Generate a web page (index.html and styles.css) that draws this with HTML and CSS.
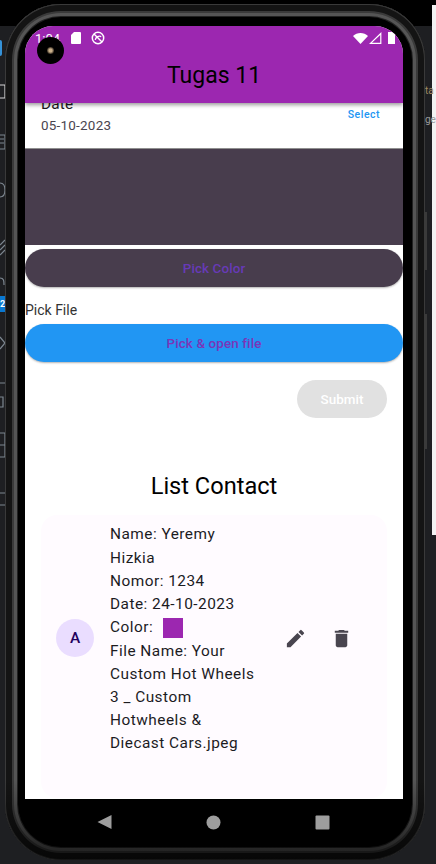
FILE: index.html
```html
<!DOCTYPE html>
<html lang="en">
<head>
    <meta charset="UTF-8">
    <meta name="viewport" content="width=device-width, initial-scale=1.0">
    <title>Tugas 11</title>
    <link rel="stylesheet" href="styles.css">
</head>
<body>

    <div class="ide-top"></div>
    <div class="ide-panel"></div>
    <div class="ide-tab"></div>
    <svg class="ide-icons" width="6" height="450" viewBox="0 0 6 450">
        <path fill="none" stroke="#d5d5d5" stroke-width="1.200" d="M0 10h5v13H0"/>
        <path fill="none" stroke="#7d8790" stroke-width="1.200" d="M0 60h5v14H0M0 64h4M0 68h4"/>
        <path fill="none" stroke="#7d8790" stroke-width="1.200" d="M0 108c4 0 5 3 5 7s-1 7-5 7"/>
        <path fill="none" stroke="#7d8790" stroke-width="1.200" d="M0 170l5-5M0 175l5-5M0 180l5-5"/>
        <path fill="none" stroke="#7d8790" stroke-width="1.200" d="M0 203c4 0 4 3 4 7"/>
        <path fill="none" stroke="#7d8790" stroke-width="1.200" d="M0 262l5 6-5 6"/>
        <path fill="none" stroke="#7d8790" stroke-width="1.200" d="M0 308h5M0 322h3v10H0M0 358h5v24H0M0 370h5M0 418h5M0 430h5"/>
    </svg>
    <div class="ide-badge">2</div>
    <span class="ide-text ide-text-1">ta</span>
    <span class="ide-text ide-text-2">ge</span>

    <div class="side-btn side-btn-power"></div>
    <div class="side-btn side-btn-volume"></div>

    <div class="phone">
        <div class="screen">
            <div class="appbar">
                <div class="statusbar">
                    <span class="clock">1:04</span>
                    <svg class="sd-icon" width="10" height="12" viewBox="0 0 10 12"><path fill="#fff" d="M3 0h6a1 1 0 0 1 1 1v10a1 1 0 0 1-1 1H1a1 1 0 0 1-1-1V3z"/></svg>
                    <svg class="sync-icon" width="14" height="14" viewBox="0 0 14 14"><circle cx="7" cy="7" r="5.700" fill="none" stroke="#fff" stroke-width="1.500"/><path d="M3 3l8 8" stroke="#fff" stroke-width="1.400"/><path d="M4.200 8.800c.6-3 3.800-4.600 6-3.200" fill="none" stroke="#fff" stroke-width="1.300"/></svg>
                    <span class="status-gap"></span>
                    <svg width="15" height="11" viewBox="0 0 15 11"><path fill="#fff" d="M0 3C4-1 11-1 15 3L7.500 11z"/></svg>
                    <svg class="signal-icon" width="13" height="12" viewBox="0 0 13 12"><path fill="none" stroke="#fff" stroke-width="1.200" d="M11.800 1.500V11.400H1.500z"/></svg>
                    <span class="battery"></span>
                </div>
                <div class="appbar-title">Tugas 11</div>
            </div>

            <div class="content">
                <div class="date-row">
                    <div class="date-text">
                        <div class="date-label">Date</div>
                        <div class="date-value">05-10-2023</div>
                    </div>
                    <span class="select-btn">Select</span>
                </div>

                <div class="color-preview"></div>
                <div class="pill pill-color">Pick Color</div>

                <div class="pick-label">Pick File</div>
                <div class="pill pill-file">Pick &amp; open file</div>

                <div class="submit-row">
                    <span class="submit-btn">Submit</span>
                </div>

                <h2 class="list-title">List Contact</h2>

                <div class="contact-card">
                    <div class="avatar">A</div>
                    <div class="contact-text">
                        <div>Name: Yeremy<br>Hizkia</div>
                        <div>Nomor: 1234</div>
                        <div>Date: 24-10-2023</div>
                        <div class="color-line">Color: <span class="swatch"></span></div>
                        <div>File Name: Your<br>Custom Hot Wheels<br>3 _ Custom<br>Hotwheels &amp;<br>Diecast Cars.jpeg</div>
                    </div>
                    <div class="contact-actions">
                        <svg width="23" height="23" viewBox="0 0 24 24"><path fill="#49454f" d="M3 17.250V21h3.750L17.810 9.940l-3.750-3.750L3 17.250zM20.710 7.040a1 1 0 0 0 0-1.410l-2.340-2.340a1 1 0 0 0-1.410 0l-1.830 1.830 3.750 3.750 1.830-1.830z"/></svg>
                        <svg width="23" height="23" viewBox="0 0 24 24"><path fill="#49454f" d="M6 19c0 1.100.9 2 2 2h8c1.100 0 2-.9 2-2V7H6v12zM19 4h-3.500l-1-1h-5l-1 1H5v2h14V4z"/></svg>
                    </div>
                </div>
            </div>
        </div>

        <div class="navbar">
            <svg width="15" height="16" viewBox="0 0 15 16"><path fill="#9e9e9e" d="M14.500 1v14L.5 8z"/></svg>
            <svg width="15" height="15" viewBox="0 0 15 15"><circle cx="7.500" cy="7.500" r="7" fill="#9e9e9e"/></svg>
            <svg width="15" height="15" viewBox="0 0 15 15"><rect x=".5" y=".5" width="14" height="14" rx="1" fill="#9e9e9e"/></svg>
        </div>

        <div class="camera"><span class="lens"></span></div>
    </div>

</body>
</html>
```

FILE: styles.css
```css
* {
    box-sizing: border-box;
}
body {
    margin: 0;
    width: 436px;
    height: 864px;
    overflow: hidden;
    position: relative;
    background: #1e1f22;
    font-family: Roboto, sans-serif;
    color: #1c1b1f;
}

/* bits of the IDE behind the emulator */
.ide-top {
    position: absolute;
    left: 0;
    top: 0;
    width: 436px;
    height: 26px;
    background: #000;
}
.ide-panel {
    position: absolute;
    left: 432px;
    top: 5px;
    width: 4px;
    height: 530px;
    background: #f2f2f2;
}
.ide-tab {
    position: absolute;
    left: 0;
    top: 40px;
    width: 2px;
    height: 16px;
    background: #3592d8;
    border-radius: 0 2px 2px 0;
}
.ide-icons {
    position: absolute;
    left: 0;
    top: 75px;
}
.ide-badge {
    position: absolute;
    left: 0;
    top: 296px;
    width: 5px;
    height: 16px;
    background: #0a78d0;
    color: #fff;
    font-size: 9px;
    font-weight: 700;
    line-height: 16px;
    overflow: hidden;
}
.ide-text {
    position: absolute;
    left: 425px;
    font-size: 10px;
    line-height: 12px;
}
.ide-text-1 {
    top: 85px;
    color: #a08a60;
}
.ide-text-2 {
    top: 114px;
    color: #9a9a9a;
}
.side-btn {
    position: absolute;
    left: 425px;
    width: 2px;
    background: #3a3a3a;
}
.side-btn-power {
    top: 212px;
    height: 58px;
}
.side-btn-volume {
    top: 314px;
    height: 135px;
}

.phone {
    position: relative;
    width: 420px;
    height: 856px;
    margin: 4px 0 0 5px;
    padding: 22px 22px 0 20px;
    background: #000;
    border-radius: 56px;
    box-shadow: inset 0 0 0 1px #3a3a3a, inset 0 0 0 7px #141414, inset 0 0 0 9px #3a3a3a, inset 0 0 0 12px #555, inset 0 0 0 13px #222;
}
/* the rim goes darker towards the bottom of the device */
.phone::after {
    content: "";
    position: absolute;
    left: 0;
    right: 0;
    bottom: 0;
    height: 80px;
    border-radius: 0 0 56px 56px;
    background: linear-gradient(rgba(0, 0, 0, 0), rgba(0, 0, 0, 0.65));
}
.screen {
    position: relative;
    z-index: 1;
    width: 378px;
    height: 773px;
    background: #fff;
    border-radius: 28px 28px 0 0;
    overflow: hidden;
    display: flex;
    flex-direction: column;
}
.appbar {
    flex: none;
    height: 77px;
    background: #9c27b0;
    box-shadow: 0 2px 4px rgba(0, 0, 0, 0.4);
    position: relative;
    z-index: 1;
}
.statusbar {
    height: 24px;
    padding: 0 8px 0 10px;
    display: flex;
    align-items: center;
    color: #fff;
    font-size: 13px;
}
.sd-icon {
    margin-left: 11px;
}
.sync-icon {
    margin-left: 10px;
}
.status-gap {
    flex: 1;
}
.signal-icon {
    margin-left: 1px;
}
.battery {
    width: 7px;
    height: 12px;
    background: #fff;
    margin-left: 6px;
}
.appbar-title {
    text-align: center;
    font-size: 23px;
    line-height: 32px;
    margin-top: 10px;
    color: #000;
}
.content {
    flex: 1;
    overflow: hidden;
}
.date-row {
    height: 46px;
    padding: 0 23px 0 16px;
    display: flex;
    justify-content: space-between;
    border-bottom: 1px solid #8f8f8f;
}
.date-label {
    font-size: 15.400px;
    line-height: 20px;
    margin-top: -9px;
    letter-spacing: 0.15px;
}
.date-value {
    font-size: 13.440px;
    line-height: 20px;
    margin-top: 2px;
    letter-spacing: 0.24px;
    color: #49454f;
}
.select-btn {
    font-size: 10.500px;
    font-weight: 500;
    color: #2196f3;
    letter-spacing: 0.5px;
    margin-top: 5px;
}
.color-preview {
    height: 96px;
    background: #483d4d;
}
.pill {
    height: 38px;
    border-radius: 19px;
    display: flex;
    align-items: center;
    justify-content: center;
    font-size: 13.440px;
    font-weight: 500;
    letter-spacing: 0.1px;
    box-shadow: 0 1px 2px rgba(0, 0, 0, 0.3);
}
.pill-color {
    margin-top: 4px;
    background: #483d4d;
    color: #673ab7;
}
.pill-file {
    background: #2196f3;
    color: #7b35b8;
}
.pick-label {
    font-size: 14px;
    line-height: 20px;
    margin-top: 13px;
    margin-bottom: 4px;
    color: #333;
}
.submit-row {
    display: flex;
    justify-content: flex-end;
    padding-right: 16px;
    margin-top: 18px;
}
.submit-btn {
    width: 90px;
    height: 38px;
    border-radius: 19px;
    background: #e1e1e1;
    color: #fff;
    font-size: 13.440px;
    font-weight: 500;
    display: flex;
    align-items: center;
    justify-content: center;
}
.list-title {
    margin: 52px 0 0;
    text-align: center;
    font-size: 23.600px;
    font-weight: 400;
    line-height: 32px;
    color: #000;
}
.contact-card {
    margin: 13px 16px 0;
    height: 283px;
    background: #fffbff;
    border-radius: 16px;
    padding: 0 16px 37px 15px;
    display: flex;
    align-items: center;
}
.avatar {
    flex: none;
    width: 38px;
    height: 38px;
    border-radius: 50%;
    background: #eaddff;
    color: #21005d;
    font-size: 15.400px;
    font-weight: 500;
    display: flex;
    align-items: center;
    justify-content: center;
}
.contact-text {
    width: 160px;
    margin-left: 16px;
    padding-top: 3px;
    font-size: 15.400px;
    line-height: 23.200px;
    letter-spacing: 0.48px;
    color: #1c1b1f;
}
.color-line {
    display: flex;
    align-items: center;
    gap: 9.500px;
}
.swatch {
    width: 20px;
    height: 20px;
    background: #9c27b0;
}
.contact-actions {
    display: flex;
    gap: 23px;
    margin-left: 14px;
}
.navbar {
    position: relative;
    z-index: 1;
    height: 41px;
    width: 378px;
    padding: 5px 73px 0 72px;
    display: flex;
    align-items: center;
    justify-content: space-between;
}
.camera {
    position: absolute;
    z-index: 2;
    left: 32px;
    top: 33px;
    width: 27px;
    height: 27px;
    border-radius: 50%;
    background: #000;
    display: flex;
    align-items: center;
    justify-content: center;
}
.lens {
    width: 7px;
    height: 7px;
    border-radius: 50%;
    background: radial-gradient(circle, #c9b08a 0 30%, #3b3026 70%);
}
```
